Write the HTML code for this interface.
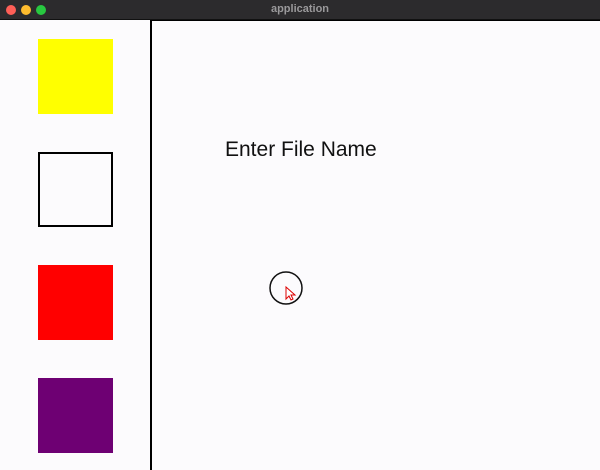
<!DOCTYPE html>
<html><head><style>
html,body{margin:0;padding:0;width:600px;height:470px;overflow:hidden;background:#fcfbfd;font-family:"Liberation Sans",sans-serif;}
.tb{position:absolute;left:0;top:0;width:600px;height:20px;background:#2c2b2d;border-bottom:1px solid #111;box-sizing:border-box}
.d{position:absolute;top:5px;width:10px;height:10px;border-radius:50%}
.t{position:absolute;left:0;width:600px;top:3px;text-align:center;color:#9a999b;font-size:11px;font-weight:bold}
.sq{position:absolute;left:38px;width:75px;height:75px}
.div{position:absolute;left:150px;top:20px;width:2px;height:450px;background:#000}
</style></head><body>
<div class="tb">
<div class="d" style="left:6px;background:#fe5f57"></div>
<div class="d" style="left:21px;background:#febc2e"></div>
<div class="d" style="left:36px;background:#28c840"></div>
<div class="t">application</div>
</div>
<div style="position:absolute;left:151px;top:20px;width:449px;height:1px;background:#000"></div>
<div class="sq" style="top:39px;background:#ffff00"></div>
<div class="sq" style="top:152px;border:2px solid #000;box-sizing:border-box;background:#fcfbfd"></div>
<div class="sq" style="top:265px;background:#ff0000"></div>
<div class="sq" style="top:378px;background:#6e0073"></div>
<div class="div"></div>
<div style="position:absolute;left:225px;top:138px;font-size:21px;color:#111">Enter File Name</div>
<svg style="position:absolute;left:268px;top:270px" width="36" height="36">
<circle cx="18" cy="18" r="16" fill="none" stroke="#111" stroke-width="1.5"/>
<path d="M18 17 L18 29 L21 26 L23 30 L25 29 L23 25 L27 25 Z" fill="#fff" stroke="#d00" stroke-width="1"/>
</svg>
</body></html>
